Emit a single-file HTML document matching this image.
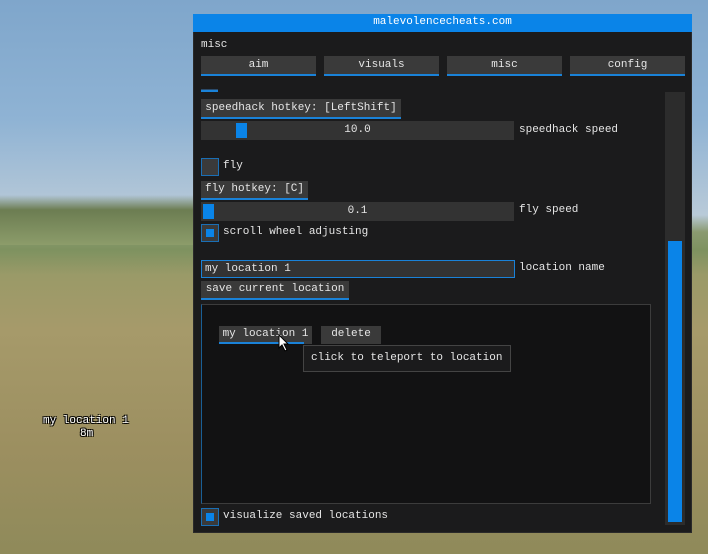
<!DOCTYPE html><html><head><style>
*{margin:0;padding:0;box-sizing:border-box}
body{width:708px;height:554px;overflow:hidden;position:relative;font-family:"Liberation Mono",monospace;font-size:11px;color:#e6e6e6;
background:linear-gradient(180deg,#7fa6cb 0px,#8fb3d4 120px,#b9cad8 215px,#8a9a70 232px,#7e9260 250px,#9a9a68 275px,#a69a6a 330px,#9c8f60 450px,#8f8a5a 554px)}
.a{position:absolute}
.btn{position:absolute;background:#3a3a3a;border-bottom:2px solid #1a82d8;text-align:center;line-height:18px;white-space:nowrap}
.txt{position:absolute;white-space:nowrap;line-height:14px}
.cb{position:absolute;width:18px;height:18px;background:#3a3a3a;border:1px solid #1a6fb5}
.cb i{position:absolute;left:4px;top:4px;width:8px;height:8px;background:#0a84e8}
.sl{position:absolute;background:#333;height:19px;text-align:center;line-height:19px}
.sl i{position:absolute;top:2px;height:15px;width:11px;background:#0a84e8}
</style></head><body>
<div class="a" style="left:0;top:195px;width:200px;height:50px;background:linear-gradient(180deg,rgba(90,110,70,0) 0,#6c7d52 30%,#8c9c6a 100%)"></div>
<div class="a" style="left:193px;top:14px;width:499px;height:519px;background:#1b1b1c;border:1px solid #2a2a2a"></div>
<div class="a" style="left:193px;top:14px;width:499px;height:18px;background:#0a84e8;color:#fff;text-align:center;line-height:17px">malevolencecheats.com</div>
<div class="txt" style="left:201px;top:38px">misc</div>
<div class="btn" style="left:201px;top:56px;width:115px;height:20px">aim</div>
<div class="btn" style="left:324px;top:56px;width:115px;height:20px">visuals</div>
<div class="btn" style="left:447px;top:56px;width:115px;height:20px">misc</div>
<div class="btn" style="left:570px;top:56px;width:115px;height:20px">config</div>
<div class="a" style="left:665px;top:92px;width:20px;height:433px;background:#2c2c2c"></div>
<div class="a" style="left:668px;top:241px;width:14px;height:281px;background:#0a84e8"></div>
<div class="a" style="left:201px;top:89px;width:17px;height:3px;background:#2a4a6a;border-bottom:2px solid #1a82d8"></div>
<div class="btn" style="left:201px;top:99px;width:200px;height:20px">speedhack hotkey: [LeftShift]</div>
<div class="sl" style="left:201px;top:121px;width:313px">10.0<i style="left:35px"></i></div>
<div class="txt" style="left:519px;top:123px">speedhack speed</div>
<div class="cb" style="left:201px;top:158px"></div>
<div class="txt" style="left:223px;top:159px">fly</div>
<div class="btn" style="left:201px;top:181px;width:107px;height:19px;line-height:17px">fly hotkey: [C]</div>
<div class="sl" style="left:201px;top:202px;width:313px">0.1<i style="left:2px"></i></div>
<div class="txt" style="left:519px;top:203px">fly speed</div>
<div class="cb" style="left:201px;top:224px"><i></i></div>
<div class="txt" style="left:223px;top:225px">scroll wheel adjusting</div>
<div class="a" style="left:201px;top:260px;width:314px;height:18px;background:#333;border:1px solid #1a82d8;line-height:16px;padding-left:3px">my location 1</div>
<div class="txt" style="left:519px;top:261px">location name</div>
<div class="btn" style="left:201px;top:281px;width:148px;height:19px;line-height:17px">save current location</div>
<div class="a" style="left:201px;top:304px;width:450px;height:200px;background:#121213;border:1px solid #3c3c3c;border-left-color:#1a5f95"></div>
<div class="btn" style="left:219px;top:326px;width:93px;height:18px;line-height:16px;border-bottom:none">my location 1</div>
<div class="a" style="left:219px;top:342px;width:85px;height:2px;background:#1a82d8"></div>
<div class="btn" style="left:321px;top:326px;width:60px;height:18px;line-height:16px;border-bottom:none">delete</div>
<div class="a" style="left:303px;top:345px;width:208px;height:27px;background:#1b1b1c;border:1px solid #444;line-height:24px;padding-left:7px">click to teleport to location</div>
<svg class="a" style="left:278px;top:334px" width="12" height="18"><path d="M1 1 L1 14 L4 11 L7 17 L9 16 L6 10 L10 10 Z" fill="#fff" stroke="#000" stroke-width="1"/></svg>
<div class="cb" style="left:201px;top:508px"><i></i></div>
<div class="txt" style="left:223px;top:509px">visualize saved locations</div>
<div class="txt" style="left:43px;top:414px;color:#fff;text-shadow:1px 1px 0 #000,-1px -1px 0 #000,1px -1px 0 #000,-1px 1px 0 #000">my location 1</div>
<div class="txt" style="left:80px;top:427px;color:#fff;text-shadow:1px 1px 0 #000,-1px -1px 0 #000,1px -1px 0 #000,-1px 1px 0 #000">8m</div>
</body></html>
